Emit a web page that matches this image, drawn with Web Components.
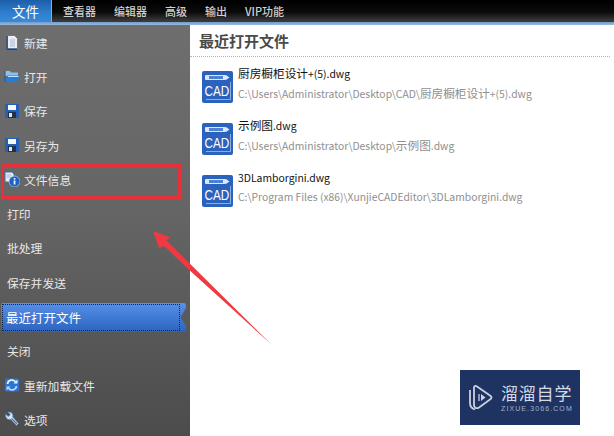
<!DOCTYPE html>
<html>
<head>
<meta charset="utf-8">
<style>
  html, body { margin: 0; height: 100%; background: #fff; overflow: hidden; }
  body { font-family: "Noto Sans CJK SC", "Liberation Sans", sans-serif; }
</style>
</head>
<body>
<app-shell>
  <menu-bar slot="top">
    <menu-tab active>文件</menu-tab>
    <menu-tab>查看器</menu-tab>
    <menu-tab>编辑器</menu-tab>
    <menu-tab>高级</menu-tab>
    <menu-tab>输出</menu-tab>
    <menu-tab>VIP功能</menu-tab>
  </menu-bar>
  <side-bar slot="side">
    <side-item icon="new">新建</side-item>
    <side-item icon="open">打开</side-item>
    <side-item icon="save">保存</side-item>
    <side-item icon="save">另存为</side-item>
    <side-item icon="info">文件信息</side-item>
    <side-item>打印</side-item>
    <side-item>批处理</side-item>
    <side-item>保存并发送</side-item>
    <side-item active>最近打开文件</side-item>
    <side-item>关闭</side-item>
    <side-item icon="reload">重新加载文件</side-item>
    <side-item icon="tools">选项</side-item>
  </side-bar>
  <recent-panel title="最近打开文件">
    <recent-item name="厨房橱柜设计+(5).dwg" path="C:\Users\Administrator\Desktop\CAD\厨房橱柜设计+(5).dwg"></recent-item>
    <recent-item name="示例图.dwg" path="C:\Users\Administrator\Desktop\示例图.dwg"></recent-item>
    <recent-item name="3DLamborgini.dwg" path="C:\Program Files (x86)\XunjieCADEditor\3DLamborgini.dwg"></recent-item>
  </recent-panel>
  <red-callout slot="over"></red-callout>
  <brand-logo slot="over"></brand-logo>
</app-shell>

<script>
class AppShell extends HTMLElement {
  constructor() {
    super();
    this.attachShadow({ mode: "open" });
    this.shadowRoot.innerHTML = `
      <style>
        :host { display: grid; position: relative; width: 614px; height: 436px; overflow: hidden;
                grid-template-columns: 190px 1fr; grid-template-rows: 25px 1fr; }
        .top { grid-column: 1 / 3; display: block; }
      </style>
      <div class="top"><slot name="top"></slot></div>
      <slot name="side"></slot>
      <slot></slot>
      <slot name="over"></slot>
    `;
  }
}

class MenuBar extends HTMLElement {
  constructor() {
    super();
    this.attachShadow({ mode: "open" });
    this.shadowRoot.innerHTML = `
      <style>
        :host { display: flex; height: 25px; box-sizing: border-box; padding-bottom: 3px;
                background: linear-gradient(#000 0, #0a0a0a 12px, #3a3a3a 21px, #3a3a3a 22px, #6f9ccf 22px, #9db9d8 25px); }
      </style>
      <slot></slot>
    `;
  }
}

class MenuTab extends HTMLElement {
  constructor() {
    super();
    this.attachShadow({ mode: "open" });
    this.shadowRoot.innerHTML = `
      <style>
        :host { display: flex; align-items: center; justify-content: center; height: 22px; padding: 0 9px;
                color: #cfcfcf; font-size: 11px; font-weight: 500; }
        :host([active]) { width: 52px; padding: 0; margin-right: 2px; box-sizing: border-box;
                color: #fff; font-size: 13.500px; font-weight: 400;
                background: linear-gradient(#1d5ea8, #2f7fd0 60%, #3a8ad8); border-right: 1px solid #7fb0e0; }
      </style>
      <slot></slot>
    `;
  }
}

const ICONS = {
  new: `<path d="M3.500 1.500h7l3 3v10h-10z" fill="#e8edf5" stroke="#5a7aac"/><path d="M6 6h5M6 8h5M6 10h5M6 12h5" stroke="#a9bcd9"/><path d="M3 2v13.500h10" fill="none" stroke="#223f78"/>`,
  open: `<path d="M1 3h5l1 1.500h7V8H1z" fill="#8cc2f0"/><path d="M1 14l2.500-6.500H16L13 14z" fill="#1f7fdc"/><path d="M1 3v11" stroke="#1a5aa8"/><path d="M4 8.500h10.500" stroke="#c6e3fb"/>`,
  save: `<rect x="1" y="1" width="14" height="14" rx="1" fill="#2460b8"/><rect x="4" y="2" width="8" height="5" fill="#f4f7fb"/><rect x="4" y="9" width="8" height="6" fill="#22304a"/><rect x="5" y="10" width="3" height="4" fill="#dfe6f0"/>`,
  info: `<path d="M1 1h7l2 2v8H1z" fill="#e8edf5" stroke="#4a6a9c"/><path d="M2.500 4h5M2.500 6h4" stroke="#9db4d6"/><circle cx="10.500" cy="10.500" r="5.500" fill="#1e63c4" stroke="#cfe0f5" stroke-width=".6"/><rect x="9.700" y="9.500" width="1.700" height="4" fill="#fff"/><rect x="9.700" y="7.100" width="1.700" height="1.500" fill="#fff"/>`,
  reload: `<rect x="1" y="1.500" width="14" height="13" rx="2" fill="#2b74d4"/><path d="M3.500 7A4.500 4.500 0 0 1 11.500 4.800" fill="none" stroke="#e8f1fb" stroke-width="1.800"/><path d="M9.500 6.500h4V2.500z" fill="#e8f1fb"/><path d="M12.500 9A4.500 4.500 0 0 1 4.500 11.200" fill="none" stroke="#bcd6f3" stroke-width="1.800"/><path d="M6.500 9.500h-4v4z" fill="#bcd6f3"/>`,
  tools: `<path d="M14.500 12.500l-2 2L6.500 8.300A3.800 3.800 0 0 1 1.800 3.200L4.200 5.500 6.300 3.500 4 1.200A3.800 3.800 0 0 1 8.800 6z" fill="#d6e3f2" stroke="#4f7fb8" stroke-width=".7"/><path d="M7.500 7.500l5.500 5.500" stroke="#3a76c0" stroke-width="1.200"/>`
};

class SideBar extends HTMLElement {
  constructor() {
    super();
    this.attachShadow({ mode: "open" });
    this.shadowRoot.innerHTML = `
      <style>
        :host { display: flex; flex-direction: column; overflow: hidden;
                background: linear-gradient(#6e6e6e, #656565 45%, #4c4c4c); }
      </style>
      <slot></slot>
    `;
  }
}

class SideItem extends HTMLElement {
  constructor() {
    super();
    this.attachShadow({ mode: "open" });
    const icon = this.getAttribute("icon");
    this.shadowRoot.innerHTML = `
      <style>
        :host { display: flex; flex: 0 0 34.300px; align-items: center; color: #e8e8e8; font-size: 11.800px; }
        .row { flex: 1; display: flex; align-items: center; gap: 4px; padding-left: 7px; height: 100%; box-sizing: border-box; }
        .row.iconed { padding-left: 4px; }
        svg { width: 16px; height: 16px; flex: none; }
        :host([active]) { color: #fff; font-size: 12.500px; }
        :host([active]) .row { position: relative; height: 29px; margin: 2px 4px 0 1px; padding-left: 5px; border-radius: 2px;
          background: linear-gradient(#5a90e4, #3f7ad6 50%, #2c63bc);
          clip-path: polygon(0 0, 100% 0, 100% 18%, 97% 50%, 100% 78%, 100% 100%, 0 100%); }
        :host([active]) .row::after { content: ""; position: absolute; inset: 1px 6px 1px 1px; border: 1px dotted #0d2350; }
      </style>
      <div class="row ${icon ? "iconed" : ""}">
        ${icon ? `<svg viewBox="0 0 16 16">${ICONS[icon]}</svg>` : ""}
        <span><slot></slot></span>
      </div>
    `;
  }
}

class RecentPanel extends HTMLElement {
  constructor() {
    super();
    this.attachShadow({ mode: "open" });
    this.shadowRoot.innerHTML = `
      <style>
        :host { display: block; background: #fff; }
        h2 { margin: 0 4px 0 0; padding: 6px 0 0 9px; height: 25px; border-bottom: 1px dotted #b5b5b5;
             font: 700 15px "Noto Sans CJK SC", sans-serif; line-height: 19px; color: #4a4a4a; }
        .list { display: flex; flex-direction: column; gap: 12px; padding: 6px 0 0 12px; }
      </style>
      <h2>${this.getAttribute("title")}</h2>
      <div class="list"><slot></slot></div>
    `;
  }
}

// chinese runs are a bit bigger than the latin ones in the original
const markCjk = (s) => s.replace(/[\u4e00-\u9fff]+/g, (m) => `<span class="cjk">${m}</span>`);

class RecentItem extends HTMLElement {
  constructor() {
    super();
    this.attachShadow({ mode: "open" });
    this.shadowRoot.innerHTML = `
      <style>
        :host { display: flex; height: 40px; gap: 5px; align-items: center; }
        svg { width: 31px; height: 32px; flex: none; margin-top: 7px; }
        .txt { display: flex; flex-direction: column; gap: 4px; white-space: nowrap; }
        .name { color: #111; font-size: 10.400px; line-height: 15px; }
        .path { color: #8f8f8f; font-size: 10.350px; line-height: 15px; }
        .cjk { font-size: 11.670px; }
      </style>
      <svg viewBox="0 0 31 32">
        <rect width="31" height="32" rx="2" fill="#2a62bd"/>
        <rect x="3" y="4" width="21" height="5" rx="1" fill="#dce8f8"/>
        <rect x="7" y="5" width="14" height="3" fill="#4d82d0"/>
        <path d="M24 4l3.500 2.500L24 9z" fill="#dce8f8"/>
        <text transform="translate(2.500 25) scale(.84 1)" font-family="Liberation Sans, sans-serif" font-size="14" fill="#fff">CAD</text>
        <path d="M28.500 11v17.500H4" stroke="#9fc0ea" stroke-width=".8" fill="none"/>
      </svg>
      <div class="txt">
        <div class="name">${markCjk(this.getAttribute("name"))}</div>
        <div class="path">${markCjk(this.getAttribute("path"))}</div>
      </div>
    `;
  }
}

// annotation drawn on top of the screenshot: box + arrow
class RedCallout extends HTMLElement {
  constructor() {
    super();
    this.attachShadow({ mode: "open" });
    this.shadowRoot.innerHTML = `
      <style>
        :host { position: absolute; inset: 0; display: block; pointer-events: none; }
        svg { width: 614px; height: 436px; display: block; }
      </style>
      <svg viewBox="0 0 614 436">
        <rect x="2.500" y="165.500" width="177" height="32" fill="none" stroke="#e8303a" stroke-width="3"/>
        <path d="M153 231L170 237L166.500 240.500L272 345L187 268L164 246L159 248Z" fill="#ee3a40"/>
      </svg>
    `;
  }
}

class BrandLogo extends HTMLElement {
  constructor() {
    super();
    this.attachShadow({ mode: "open" });
    this.shadowRoot.innerHTML = `
      <style>
        :host { position: absolute; left: 460px; top: 370px; width: 120px; height: 55px; display: flex;
                align-items: center; gap: 8px; padding-left: 8px; box-sizing: border-box; background: #1f3362; color: #d4d9e4; }
        svg { width: 25px; height: 27px; flex: none; }
        .t { display: flex; flex-direction: column; gap: 1px; white-space: nowrap; }
        .cn { font-size: 17px; line-height: 20px; letter-spacing: .8px; }
        .en { font: 7px/9px "Liberation Sans", sans-serif; letter-spacing: 1.100px; color: #a9b2c6; }
      </style>
      <svg viewBox="0 0 25 27" fill="none" stroke="#c9d0de" stroke-width="1.800">
        <path d="M6 3.500c0-1.500 1.500-2 3-1l13 9c2 1.300 2 2.700 0 4l-11 8c-2.500 1.500-5 .5-5-2.500z"/>
        <path d="M2 6v13c0 3 1.500 5.500 5 6.500"/>
        <path d="M11 10v7" stroke-width="1.300"/>
        <path d="M13 10l4.500 3.500L13 17z" fill="#c9d0de" stroke="none"/>
      </svg>
      <div class="t"><div class="cn">溜溜自学</div><div class="en">ZIXUE.3066.COM</div></div>
    `;
  }
}

customElements.define("app-shell", AppShell);
customElements.define("menu-bar", MenuBar);
customElements.define("menu-tab", MenuTab);
customElements.define("side-bar", SideBar);
customElements.define("side-item", SideItem);
customElements.define("recent-panel", RecentPanel);
customElements.define("recent-item", RecentItem);
customElements.define("red-callout", RedCallout);
customElements.define("brand-logo", BrandLogo);
</script>
</body>
</html>
